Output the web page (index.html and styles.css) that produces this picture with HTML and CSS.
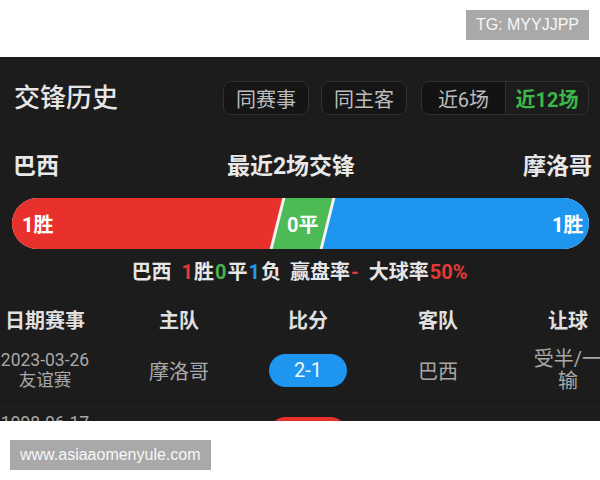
FILE: index.html
```html
<!DOCTYPE html>
<html lang="zh-CN">
<head>
    <meta charset="UTF-8">
    <meta name="viewport" content="width=device-width, initial-scale=1.0">
    <title>交锋历史</title>
    <link rel="stylesheet" href="styles.css">
</head>
<body>
    <div class="topbar">
        <span class="tag">TG: MYYJJPP</span>
    </div>

    <section class="panel">
        <header class="panel-head">
            <h1>交锋历史</h1>
            <div class="filters">
                <button class="chip">同赛事</button>
                <button class="chip">同主客</button>
                <div class="switch">
                    <button class="switch-item">近6场</button>
                    <button class="switch-item active">近12场</button>
                </div>
            </div>
        </header>

        <div class="teams">
            <span>巴西</span>
            <span>最近2场交锋</span>
            <span>摩洛哥</span>
        </div>

        <div class="bar">
            <div class="part win"><span>1胜</span></div>
            <div class="part draw"><span>0平</span></div>
            <div class="part loss"><span>1胜</span></div>
        </div>

        <div class="summary">
            <span>巴西</span>
            <span><em class="red">1</em>胜<em class="green">0</em>平<em class="blue">1</em>负</span>
            <span>赢盘率<em class="red">-</em></span>
            <span>大球率<em class="red">50%</em></span>
        </div>

        <div class="table">
            <div class="row head">
                <div>日期赛事</div>
                <div>主队</div>
                <div>比分</div>
                <div>客队</div>
                <div>让球</div>
            </div>
            <div class="row">
                <div class="date">2023-03-26<br>友谊赛</div>
                <div>摩洛哥</div>
                <div><span class="score blue-bg">2-1</span></div>
                <div>巴西</div>
                <div class="handicap">受半/一输</div>
            </div>
            <div class="row">
                <div class="date">1998-06-17<br>世界杯</div>
                <div>巴西</div>
                <div><span class="score red-bg">3-0</span></div>
                <div>摩洛哥</div>
                <div class="handicap">受一球</div>
            </div>
        </div>
    </section>

    <div class="footer">
        <span class="tag">www.asiaaomenyule.com</span>
    </div>
</body>
</html>
```

FILE: styles.css
```css
:root {
    --panel: #1c1c1c;
    --red: #e8302d;
    --green: #4cba55;
    --blue: #1e96f0;
    --line: #303030;
}

* {
    box-sizing: border-box;
}

body {
    margin: 0;
    background: #fff;
    font-family: Roboto, "Noto Sans CJK SC", sans-serif;
}

em {
    font-style: normal;
}

/* grey watermark labels */
.tag {
    display: inline-block;
    height: 30px;
    line-height: 30px;
    padding: 0 10px;
    background: #a9a9a9;
    color: #f7f7f7;
    font-family: "Liberation Sans", Arial, sans-serif;
    font-size: 16px;
}

.topbar {
    height: 57px;
    display: flex;
    justify-content: flex-end;
    align-items: flex-start;
    padding: 10px 11px 0 0;
}

.footer {
    padding: 19px 0 0 10px;
}

.panel {
    height: 364px;
    overflow: hidden;
    background: var(--panel);
    padding: 24px 0 0;
}

.panel-head {
    display: flex;
    justify-content: space-between;
    align-items: center;
    height: 34px;
    padding: 0 11px 0 14px;
}

.panel-head h1 {
    margin: 0;
    font-size: 26px;
    line-height: 34px;
    font-weight: 500;
    color: #e6e6e6;
}

.filters {
    display: flex;
    gap: 12px;
}

button {
    font-family: inherit;
    cursor: pointer;
}

.chip {
    height: 34px;
    padding: 0 12px;
    border: 1px solid var(--line);
    border-radius: 8px;
    background: #151515;
    color: #bdbdbd;
    font-size: 20px;
}

.switch {
    display: flex;
    margin-left: 2px;
    border: 1px solid var(--line);
    border-radius: 8px;
    overflow: hidden;
}

.switch-item {
    width: 83px;
    height: 32px;
    padding: 0;
    border: none;
    background: #131313;
    color: #bdbdbd;
    font-size: 20px;
}

.switch-item + .switch-item {
    border-left: 1px solid var(--line);
}

.switch-item.active {
    background: var(--panel);
    color: #3cb84a;
    font-weight: 700;
}

.teams {
    display: flex;
    justify-content: space-between;
    align-items: center;
    height: 30px;
    margin-top: 34px;
    padding: 0 8px 0 13px;
    font-size: 23px;
    font-weight: 700;
    color: #e8e8e8;
}

/* win / draw / loss bar with slanted joins */
.bar {
    display: flex;
    gap: 3px;
    height: 51px;
    margin: 19px 11px 0 12px;
    border-radius: 26px;
    overflow: hidden;
    background: #f2f2f2;
}

.part {
    display: flex;
    align-items: center;
    transform: skewX(-14deg);
    color: #fff;
    font-size: 20px;
    font-weight: 700;
}

.part span {
    transform: skewX(14deg);
}

.part.win {
    flex: 1;
    margin-left: -16px;
    padding-left: 26px;
    background: var(--red);
}

.part.draw {
    width: 47px;
    justify-content: center;
    background: var(--green);
}

.part.loss {
    flex: 1;
    margin-right: -16px;
    padding-right: 22px;
    justify-content: flex-end;
    background: var(--blue);
}

.summary {
    display: flex;
    justify-content: center;
    gap: 9px;
    height: 24px;
    line-height: 24px;
    margin-top: 11px;
    font-size: 20px;
    font-weight: 700;
    color: #e6e6e6;
}

.summary .red { color: #e53935; }
.summary .green { color: #4caf50; }
.summary .blue { color: #2196f3; }
.summary em { margin: 0 1px; }

.table {
    margin-top: 15px;
    width: 608px;
}

.row {
    display: grid;
    grid-template-columns: 90px 178px 80px 180px 80px;
    align-items: center;
    min-height: 63px;
    text-align: center;
    font-size: 20px;
    color: #a8a8a8;
    border-bottom: 1px solid #151515;
}

.row.head {
    min-height: 40px;
    border-bottom: none;
    font-weight: 700;
    color: #e0e0e0;
}

.date {
    font-size: 17.5px;
    line-height: 20px;
}

.handicap {
    line-height: 22px;
}

.score {
    display: block;
    width: 78px;
    height: 33px;
    margin: 0 auto;
    line-height: 33px;
    border-radius: 17px;
    color: #eef6ff;
    font-size: 20px;
}

.blue-bg { background: var(--blue); }
.red-bg { background: var(--red); }
```
